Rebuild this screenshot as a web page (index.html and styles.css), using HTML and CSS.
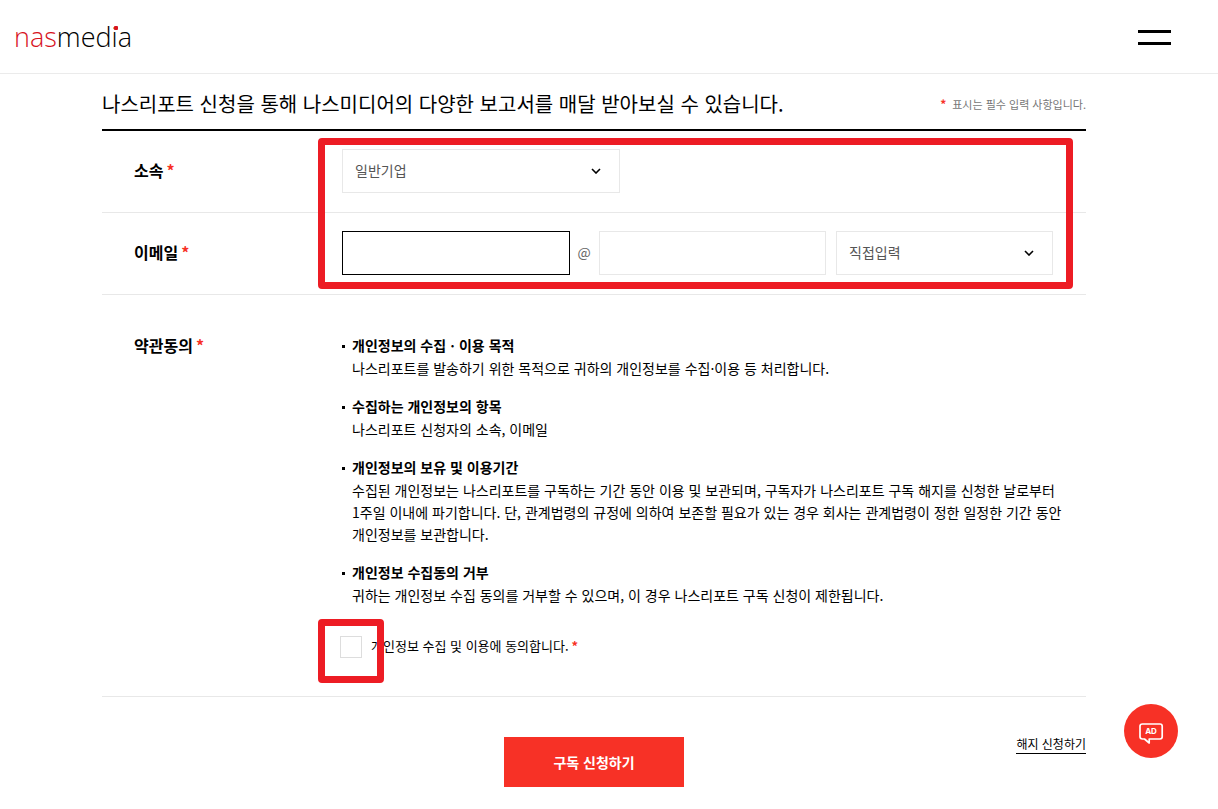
FILE: index.html
```html
<!DOCTYPE html>
<html lang="ko">
<head>
<meta charset="utf-8">
<meta name="viewport" content="width=device-width, initial-scale=1">
<title>nasmedia</title>
<link rel="stylesheet" href="styles.css">
</head>
<body>
<header class="header">
  <a class="logo" href="#"><span class="logo-nas">nas</span>med<span class="logo-i">i</span>a</a>
  <button class="menu" type="button" aria-label="메뉴"><span class="menu-bar"></span><span class="menu-bar"></span></button>
</header>
<main class="main">
  <div class="intro">
    <h1 class="title">나스리포트 신청을 통해 나스미디어의 다양한 보고서를 매달 받아보실 수 있습니다.</h1>
    <p class="note"><span class="star">*</span>표시는 필수 입력 사항입니다.</p>
  </div>
  <form class="form">
    <div class="row">
      <label class="label" for="group">소속<span class="star">*</span></label>
      <div class="fields">
        <select class="control select group" id="group"><option>일반기업</option></select>
      </div>
    </div>
    <div class="row">
      <label class="label" for="email">이메일<span class="star">*</span></label>
      <div class="fields">
        <input class="control text current" id="email" type="text">
        <span class="at">@</span>
        <input class="control text" type="text" aria-label="이메일 도메인">
        <select class="control select domain" aria-label="도메인 선택"><option>직접입력</option></select>
      </div>
    </div>
    <div class="row terms-row">
      <span class="label">약관동의<span class="star">*</span></span>
      <div class="terms">
        <ul class="list">
          <li class="item"><h2 class="item-title">개인정보의 수집ㆍ이용 목적</h2><p class="item-text">나스리포트를 발송하기 위한 목적으로 귀하의 개인정보를 수집·이용 등 처리합니다.</p></li>
          <li class="item"><h2 class="item-title">수집하는 개인정보의 항목</h2><p class="item-text">나스리포트 신청자의 소속, 이메일</p></li>
          <li class="item"><h2 class="item-title">개인정보의 보유 및 이용기간</h2><p class="item-text">수집된 개인정보는 나스리포트를 구독하는 기간 동안 이용 및 보관되며, 구독자가 나스리포트 구독 해지를 신청한 날로부터<br>1주일 이내에 파기합니다. 단, 관계법령의 규정에 의하여 보존할 필요가 있는 경우 회사는 관계법령이 정한 일정한 기간 동안<br>개인정보를 보관합니다.</p></li>
          <li class="item"><h2 class="item-title">개인정보 수집동의 거부</h2><p class="item-text">귀하는 개인정보 수집 동의를 거부할 수 있으며, 이 경우 나스리포트 구독 신청이 제한됩니다.</p></li>
        </ul>
        <div class="agree">
          <input class="check" id="agree" type="checkbox">
          <label class="agree-label" for="agree">개인정보 수집 및 이용에 동의합니다.<span class="star">*</span></label>
          <span class="mark mark-check"></span>
        </div>
      </div>
    </div>
    <span class="mark mark-fields"></span>
    <div class="actions">
      <button class="submit" type="submit">구독 신청하기</button>
      <a class="cancel" href="#">해지 신청하기</a>
    </div>
  </form>
</main>
<a class="ad" href="#" aria-label="AD">
  <svg width="54" height="54" viewBox="0 0 54 54">
    <path d="M18.500 20H36Q38.200 20 38.200 22.200V32.800Q38.200 35 36 35H25.200V39L20.500 35H18.500Q16 35 16 32.800V22.200Q16 20 18.500 20Z" fill="none" stroke="#fff" stroke-width="1.700" stroke-linejoin="round"/>
    <text class="ad-text" x="27" y="30" text-anchor="middle">AD</text>
  </svg>
</a>
</body>
</html>
```
FILE: styles.css
```css
* { box-sizing: border-box; }
body {
  margin: 0;
  background: #fff;
  color: #000;
  font-family: "Noto Sans CJK KR", sans-serif;
  font-size: 14px;
  line-height: 22px;
  word-break: keep-all;
}
h1, h2, p, ul { margin: 0; padding: 0; }
a { color: inherit; text-decoration: none; }
button, input, select { font: inherit; margin: 0; }

.header {
  display: flex;
  align-items: center;
  justify-content: space-between;
  height: 74px;
  padding: 0 47px 0 14px;
  border-bottom: 1px solid #ebebeb;
}
.logo {
  font-family: "Open Sans", sans-serif;
  font-size: 27px;
  font-weight: 350;
  line-height: 38px;
}
.logo-nas { color: #d7141e; }
.logo-i { position: relative; }
.logo-i::after {
  content: "";
  position: absolute;
  left: 2px;
  top: 8px;
  width: 4px;
  height: 4px;
  border-radius: 1px;
  background: #d7141e;
}
.menu {
  display: flex;
  flex-direction: column;
  gap: 9px;
  width: 33px;
  padding: 2px 0 0;
  border: 0;
  background: none;
}
.menu-bar { height: 3px; background: #000; }

.main { padding: 0 132px 0 102px; }
.intro {
  display: flex;
  align-items: center;
  justify-content: space-between;
  height: 57px;
  padding-top: 5px;
  border-bottom: 2px solid #000;
}
.title { font-size: 20px; font-weight: 400; line-height: 30px; }
.note { color: #777; font-size: 11px; }
.star { margin-left: 3px; color: #f73126; font-weight: 700; }
.note .star { margin: 0 6px 0 0; font-size: 12px; }

.form { position: relative; }
.row {
  display: grid;
  grid-template-columns: 208px 1fr;
  padding: 18px 33px 19px 32px;
  border-bottom: 1px solid #e8e8e8;
}
.label { font-size: 16px; font-weight: 700; line-height: 42px; }
.fields { display: flex; }
.control {
  height: 44px;
  border: 1px solid #e8e8e8;
  border-radius: 0;
  background: #fff;
  color: #555;
  padding: 0 12px 2px;
  outline: 0;
}
.text { flex: 1; min-width: 0; }
.current { border-color: #000; }
.at { width: 29px; text-align: center; line-height: 42px; color: #666; }
.select {
  appearance: none;
  background: #fff url("data:image/svg+xml,%3Csvg xmlns='http://www.w3.org/2000/svg' width='10' height='6'%3E%3Cpath d='M1 1l4 4 4-4' fill='none' stroke='%23000' stroke-width='1.600'/%3E%3C/svg%3E") no-repeat right 18px center;
}
.group { width: 278px; }
.domain { width: 217px; margin-left: 10px; }

.terms-row { padding: 38px 12px 38px 32px; }
.terms-row .label { line-height: 24px; }
.list { display: grid; gap: 15px; list-style: none; }
.item { position: relative; padding-left: 10px; }
.item::before {
  content: "";
  position: absolute;
  left: 0;
  top: 12px;
  width: 3px;
  height: 3px;
  background: #000;
}
.item-title { font-size: 14px; font-weight: 700; line-height: 24px; }
.agree {
  position: relative;
  display: flex;
  align-items: center;
  gap: 9px;
  margin: 30px 0 0 -2px;
  font-size: 13px;
}
.agree-label { line-height: 20px; padding-bottom: 2px; }
.check {
  appearance: none;
  width: 22px;
  height: 22px;
  border: 1px solid #ddd;
  background: #fff;
}

.mark {
  position: absolute;
  border: 7px solid #ed1c24;
  border-radius: 4px;
  pointer-events: none;
}
.mark-fields { top: 7px; left: 216px; right: 13px; height: 151px; }
.mark-check { top: -17px; left: -22px; width: 66px; height: 64px; }

.actions {
  display: grid;
  grid-template-columns: 1fr 180px 1fr;
  align-items: start;
  padding: 40px 0 22px;
}
.submit {
  grid-column: 2;
  height: 50px;
  padding: 0;
  border: 0;
  background: #f73126;
  color: #fff;
  font-weight: 700;
}
.cancel {
  justify-self: end;
  padding-bottom: 2px;
  border-bottom: 1px solid #000;
  font-size: 12px;
  line-height: 14px;
}

.ad {
  position: fixed;
  right: 40px;
  bottom: 51px;
  width: 54px;
  height: 54px;
  border-radius: 50%;
  background: #f73126;
}
.ad svg { display: block; }
.ad-text { fill: #fff; font: 700 8px Inter, sans-serif; }
```
